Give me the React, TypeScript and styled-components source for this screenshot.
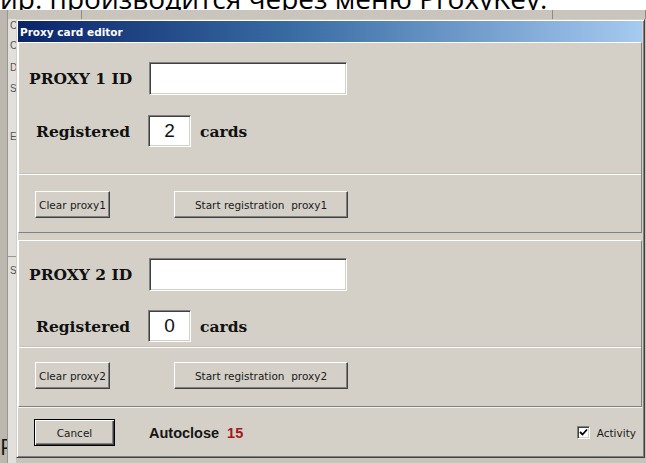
import React from "react";
import styled, { createGlobalStyle } from "styled-components";

const Global = createGlobalStyle`
  html, body { margin: 0; padding: 0; background: #ffffff; }
  body { width: 646px; height: 463px; overflow: hidden; }
  * { box-sizing: border-box; }
`;

const FACE = "#d4d0c8";
const SHADOW = "#808080";
const DARK = "#404040";

const Screen = styled.div`
  width: 646px;
  height: 463px;
  display: flex;
  flex-direction: column;
  overflow: hidden;
  background: #ffffff;
`;

/* line of the document text running above the embedded window */
const DocLine = styled.div`
  height: 10px;
  flex: none;
  overflow: hidden;
  white-space: nowrap;
  font-family: "Open Sans", "Liberation Sans", sans-serif;
  font-size: 28px;
  color: #000;
`;

const DocText = styled.span`
  display: block;
  margin-top: -16px;
  line-height: 28px;
`;

const Desk = styled.div`
  flex: 1;
  min-height: 0;
  display: flex;
`;

const FrameEdge = styled.div`
  width: 8px;
  flex: none;
  display: flex;
  flex-direction: column;
  justify-content: flex-end;
  overflow: hidden;
  background: #bcb8b0;
  border-right: 1px solid #9a968e;
`;

const EdgeGlyph = styled.span`
  display: block;
  height: 22px;
  margin-bottom: 6px;
  font-family: "Open Sans", "Liberation Sans", sans-serif;
  font-size: 22px;
  line-height: 22px;
  color: #111;
`;

const Workspace = styled.div`
  flex: 1;
  display: flex;
  flex-direction: column;
  background: #c8c4bc;
`;

const HeaderBar = styled.div`
  height: 9px;
  flex: none;
  display: flex;
  align-items: center;
  background: #c9c5bd;
`;

const HeaderCell = styled.div<{ $w: number; $dashed?: boolean }>`
  width: ${(p) => p.$w}px;
  height: 9px;
  flex: none;
  border-right: 1px solid #8e8a82;
  ${(p) =>
    p.$dashed
      ? `background: linear-gradient(90deg, #a9a59d 50%, transparent 50%) 28px 4px / 12px 1px no-repeat repeat-x;`
      : ""}
`;

const Stage = styled.div`
  flex: 1;
  display: flex;
`;

const Gutter = styled.div`
  width: 8px;
  flex: none;
  display: flex;
  flex-direction: column;
  background: #e2e0dc;
  font-family: "Liberation Sans", sans-serif;
  font-size: 10px;
  color: #555;
  overflow: hidden;
`;

const GutterMark = styled.span<{ $top: number }>`
  display: block;
  height: 10px;
  line-height: 10px;
  margin-top: ${(p) => p.$top}px;
  padding-left: 2px;
`;

const GutterRule = styled.div<{ $top: number }>`
  height: 1px;
  margin-top: ${(p) => p.$top}px;
  background: #9c9890;
`;

const Dialog = styled.div`
  width: 629px;
  height: 439px;
  flex: none;
  display: flex;
  flex-direction: column;
  background: ${FACE};
  border-top: 1px solid ${FACE};
  border-left: 1px solid ${FACE};
  border-right: 1px solid ${DARK};
  border-bottom: 1px solid ${DARK};
  box-shadow: inset 1px 1px #ffffff, inset -1px -1px ${SHADOW};
  padding: 1px 2px 1px 1px;
`;

const TitleBar = styled.div`
  height: 21px;
  flex: none;
  display: flex;
  align-items: center;
  padding-left: 2px;
  background: linear-gradient(90deg, #0a246a 0%, #3a6ea5 45%, #a6caf0 100%);
  color: #ffffff;
  font-family: "DejaVu Sans", Verdana, sans-serif;
  font-weight: bold;
  font-size: 10.5px;
`;

const Panel = styled.div<{ $mt: number; $pt: number; $pb: number }>`
  flex: none;
  display: flex;
  flex-direction: column;
  margin-top: ${(p) => p.$mt}px;
  padding-top: ${(p) => p.$pt}px;
  padding-bottom: ${(p) => p.$pb}px;
  border-top: 1px solid #ffffff;
  border-left: 1px solid #ffffff;
  border-bottom: 1px solid ${SHADOW};
  border-right: 1px solid ${SHADOW};
`;

const FieldRow = styled.div<{ $mt?: number }>`
  display: flex;
  align-items: center;
  margin-top: ${(p) => p.$mt ?? 0}px;
`;

const BigLabel = styled.span<{ $w: number; $pl: number }>`
  width: ${(p) => p.$w}px;
  padding-left: ${(p) => p.$pl}px;
  flex: none;
  font-family: "DejaVu Serif", "Liberation Serif", serif;
  font-weight: bold;
  font-size: 15.5px;
  color: #101010;
  white-space: nowrap;
`;

const Sunken = styled.div`
  background: #ffffff;
  border-top: 1px solid ${SHADOW};
  border-left: 1px solid ${SHADOW};
  border-bottom: 1px solid #ffffff;
  border-right: 1px solid #ffffff;
  box-shadow: inset 1px 1px ${DARK}, inset -1px -1px ${FACE};
`;

const IdField = styled(Sunken)`
  width: 198px;
  height: 33px;
  flex: none;
`;

const CountBox = styled(Sunken)`
  width: 43px;
  height: 32px;
  flex: none;
  display: flex;
  align-items: center;
  justify-content: center;
  font-family: "Liberation Sans", Arial, sans-serif;
  font-size: 19px;
  color: #111;
`;

const Unit = styled.span`
  margin-left: 9px;
  font-family: "DejaVu Serif", "Liberation Serif", serif;
  font-weight: bold;
  font-size: 15.5px;
  color: #101010;
`;

const Divider = styled.div<{ $mt: number }>`
  height: 1px;
  margin-top: ${(p) => p.$mt}px;
  background: #ffffff;
  box-shadow: 0 -1px #c4c0b8;
`;

const ButtonRow = styled.div<{ $mt: number; $pl?: number }>`
  display: flex;
  align-items: center;
  margin-top: ${(p) => p.$mt}px;
  padding-left: ${(p) => p.$pl ?? 16}px;
`;

const Button = styled.button<{ $w: number; $h?: number; $ml?: number; $default?: boolean }>`
  width: ${(p) => p.$w}px;
  height: ${(p) => p.$h ?? 27}px;
  margin: 0 0 0 ${(p) => p.$ml ?? 0}px;
  padding: 0;
  flex: none;
  background: ${FACE};
  font-family: "DejaVu Sans", Verdana, sans-serif;
  font-size: 10.5px;
  color: #1a1a1a;
  white-space: pre;
  ${(p) =>
    p.$default
      ? `border: 1px solid #000000;
         box-shadow: inset 1px 1px #ffffff, inset -1px -1px ${DARK}, inset -2px -2px ${SHADOW};`
      : `border-top: 1px solid #ffffff;
         border-left: 1px solid #ffffff;
         border-bottom: 1px solid ${DARK};
         border-right: 1px solid ${DARK};
         box-shadow: inset -1px -1px ${SHADOW};`}
`;

const Footer = styled.div`
  flex: 1;
  display: flex;
  align-items: center;
  padding: 1px 6px 0 16px;
  border-top: 1px solid #f4f2ee;
`;

const Autoclose = styled.span`
  margin-left: 34px;
  font-family: "Liberation Sans", Arial, sans-serif;
  font-weight: bold;
  font-size: 14.5px;
  color: #151515;
`;

const Countdown = styled.span`
  margin-left: 8px;
  color: #a01818;
`;

const CheckWrap = styled.label`
  margin-left: auto;
  display: flex;
  align-items: center;
  gap: 7px;
  font-family: "DejaVu Sans", Verdana, sans-serif;
  font-size: 10.5px;
  color: #1a1a1a;
`;

const CheckBox = styled(Sunken)`
  width: 13px;
  height: 13px;
  display: flex;
  align-items: center;
  justify-content: center;
`;

function ProxyPanel(props: {
  n: number;
  count: number;
  mt: number;
  pt: number;
  pb: number;
  regGap: number;
  divGap: number;
  btnGap: number;
}) {
  const { n, count } = props;
  return (
    <Panel $mt={props.mt} $pt={props.pt} $pb={props.pb}>
      <FieldRow>
        <BigLabel $w={130} $pl={10}>PROXY {n} ID</BigLabel>
        <IdField />
      </FieldRow>
      <FieldRow $mt={props.regGap}>
        <BigLabel $w={129} $pl={17}>Registered</BigLabel>
        <CountBox>{count}</CountBox>
        <Unit>cards</Unit>
      </FieldRow>
      <Divider $mt={props.divGap} />
      <ButtonRow $mt={props.btnGap}>
        <Button $w={75}>Clear proxy{n}</Button>
        <Button $w={174} $ml={64}>{`Start registration  proxy${n}`}</Button>
      </ButtonRow>
    </Panel>
  );
}

export default function App() {
  return (
    <>
      <Global />
      <Screen>
        <DocLine>
          <DocText>ир. производится через меню ProxyKey.</DocText>
        </DocLine>
        <Desk>
          <FrameEdge>
            <EdgeGlyph>P</EdgeGlyph>
          </FrameEdge>
          <Workspace>
            <HeaderBar>
              <HeaderCell $w={74} />
              <HeaderCell $w={471} $dashed />
              <HeaderCell $w={93} />
            </HeaderBar>
            <Stage>
              <Gutter>
                <GutterMark $top={2}>C</GutterMark>
                <GutterMark $top={10}>C</GutterMark>
                <GutterMark $top={12}>D</GutterMark>
                <GutterMark $top={11}>S</GutterMark>
                <GutterMark $top={38}>E</GutterMark>
                <GutterRule $top={114} />
                <GutterMark $top={9}>St</GutterMark>
              </Gutter>
              <Dialog>
                <TitleBar>Proxy card editor</TitleBar>
                <ProxyPanel n={1} count={2} mt={0} pt={19} pb={14} regGap={20} divGap={27} btnGap={16} />
                <ProxyPanel n={2} count={0} mt={7} pt={17} pb={17} regGap={19} divGap={5} btnGap={14} />
                <Footer>
                  <Button $w={81} $h={27} $default>Cancel</Button>
                  <Autoclose>
                    Autoclose<Countdown>15</Countdown>
                  </Autoclose>
                  <CheckWrap>
                    <CheckBox>
                      <svg width="9" height="9" viewBox="0 0 9 9">
                        <path d="M1 4 L3.5 6.5 L8 1.5" stroke="#000" strokeWidth="1.8" fill="none" />
                      </svg>
                    </CheckBox>
                    Activity
                  </CheckWrap>
                </Footer>
              </Dialog>
            </Stage>
          </Workspace>
        </Desk>
      </Screen>
    </>
  );
}
